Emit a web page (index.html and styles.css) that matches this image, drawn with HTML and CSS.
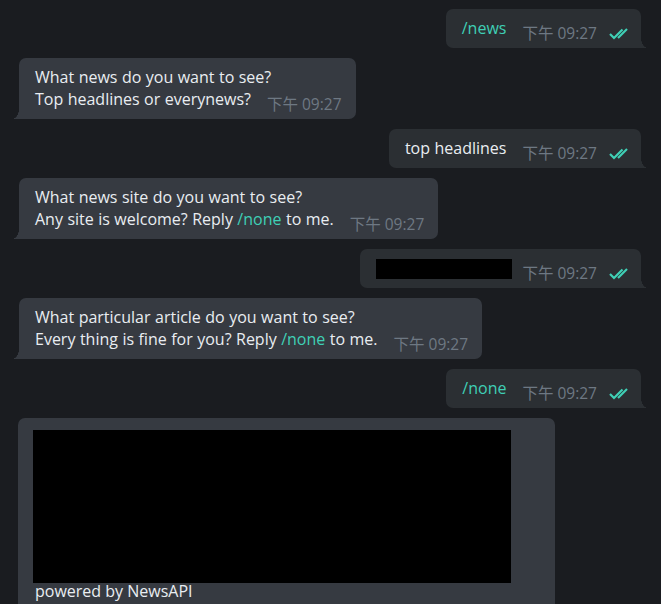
FILE: index.html
```html
<!DOCTYPE html>
<html>
<head>
<meta charset="utf-8">
<link rel="stylesheet" href="styles.css">
</head>
<body>
<div class="chat">
  <div class="row out">
    <div class="bubble">
      <div class="text"><span class="cmd">/news</span><span class="meta"><span class="time">下午 09:27</span><svg class="check" width="22" height="13" viewBox="0 0 22 13"><path d="M1 7 L5 11 L13.5 2.5" /><path d="M9 11 L18 2" /></svg></span></div>
    </div>
  </div>
  <div class="row in">
    <div class="bubble">
      <div class="text">What news do you want to see?<br>Top headlines or everynews?<span class="meta"><span class="time">下午 09:27</span></span></div>
    </div>
  </div>
  <div class="row out">
    <div class="bubble">
      <div class="text">top headlines<span class="meta"><span class="time">下午 09:27</span><svg class="check" width="22" height="13" viewBox="0 0 22 13"><path d="M1 7 L5 11 L13.5 2.5" /><path d="M9 11 L18 2" /></svg></span></div>
    </div>
  </div>
  <div class="row in">
    <div class="bubble">
      <div class="text">What news site do you want to see?<br>Any site is welcome? Reply <span class="cmd">/none</span> to me.<span class="meta"><span class="time">下午 09:27</span></span></div>
    </div>
  </div>
  <div class="row out">
    <div class="bubble">
      <div class="text"><span class="redact"></span><span class="meta"><span class="time">下午 09:27</span><svg class="check" width="22" height="13" viewBox="0 0 22 13"><path d="M1 7 L5 11 L13.5 2.5" /><path d="M9 11 L18 2" /></svg></span></div>
    </div>
  </div>
  <div class="row in">
    <div class="bubble">
      <div class="text">What particular article do you want to see?<br>Every thing is fine for you? Reply <span class="cmd">/none</span> to me.<span class="meta"><span class="time">下午 09:27</span></span></div>
    </div>
  </div>
  <div class="row out">
    <div class="bubble">
      <div class="text"><span class="cmd">/none</span><span class="meta"><span class="time">下午 09:27</span><svg class="check" width="22" height="13" viewBox="0 0 22 13"><path d="M1 7 L5 11 L13.5 2.5" /><path d="M9 11 L18 2" /></svg></span></div>
    </div>
  </div>
  <div class="row in">
    <div class="card">
      <div class="card-img"></div>
      <div class="card-text">powered by NewsAPI</div>
    </div>
  </div>
</div>
</body>
</html>
```
FILE: styles.css
```css
html, body {
  margin: 0;
  padding: 0;
  background: #1a1c20;
  overflow: hidden;
}
body {
  font-family: "Open Sans", "Noto Sans CJK SC", sans-serif;
  font-size: 16px;
  color: #e9edf1;
}
.chat {
  display: flex;
  flex-direction: column;
  gap: 10px;
  padding: 9px 20px 0 19px;
}
.row {
  display: flex;
}
.row.out {
  justify-content: flex-end;
}
.row.in {
  justify-content: flex-start;
}
.bubble {
  position: relative;
  border-radius: 7px;
  padding: 8px 14px 4px 16px;
}
.out .bubble {
  background: #2b2f33;
  border-bottom-right-radius: 0;
  padding-right: 10px;
}
.in .bubble {
  background: #363a41;
  border-bottom-left-radius: 0;
}
.out .bubble::after {
  content: "";
  position: absolute;
  right: -7px;
  bottom: 0;
  width: 7px;
  height: 10px;
  background: radial-gradient(7px 10px at 100% 0, transparent 98%, #2b2f33 100%);
}
.in .bubble::after {
  content: "";
  position: absolute;
  left: -7px;
  bottom: 0;
  width: 7px;
  height: 10px;
  background: radial-gradient(7px 10px at 0 0, transparent 98%, #363a41 100%);
}
.text {
  line-height: 22px;
  white-space: nowrap;
  word-spacing: 0.3px;
}
.cmd {
  color: #3fd0b6;
}
.redact {
  display: inline-block;
  width: 136px;
  height: 20px;
  background: #000;
  vertical-align: -5px;
  margin-right: -6px;
}
.meta {
  display: inline-block;
  margin-left: 16px;
  line-height: 22px;
  vertical-align: -5px;
  white-space: nowrap;
  word-spacing: 0;
}
.time {
  color: #6e7883;
  font-size: 15.5px;
}
.check {
  margin-left: 12px;
  vertical-align: -1px;
  fill: none;
  stroke: #3fd0b6;
  stroke-width: 2.2;
}
.card {
  background: #363a41;
  border-radius: 7px 7px 0 0;
  width: 537px;
  padding: 12px 0 0 15px;
  margin-left: -1px;
  height: 200px;
  box-sizing: border-box;
}
.card-img {
  width: 478px;
  height: 153px;
  background: #000;
}
.card-text {
  line-height: 22px;
  margin-left: 2px;
  margin-top: -3px;
}
```
